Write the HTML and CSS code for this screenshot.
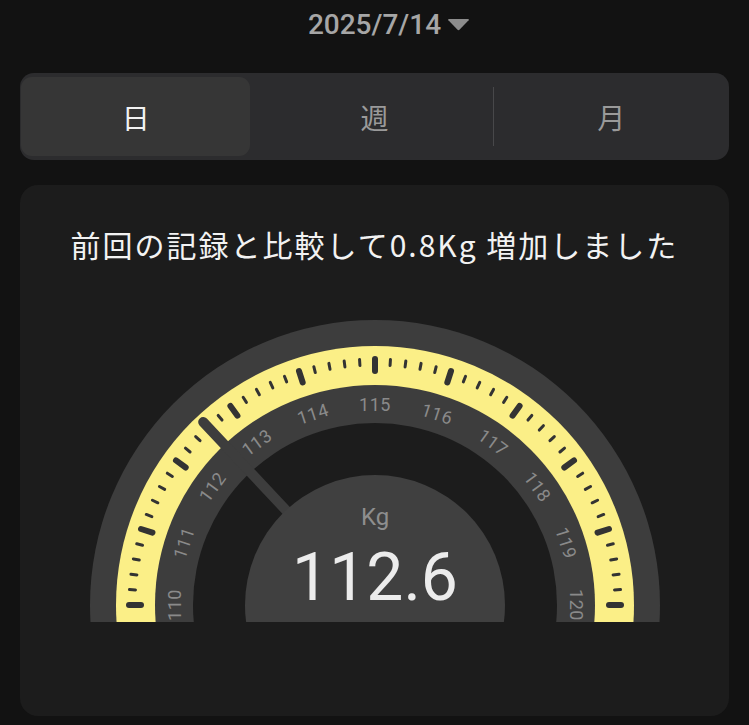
FILE: index.html
```html
<!DOCTYPE html>
<html lang="ja">
<head>
    <meta charset="UTF-8">
    <meta name="viewport" content="width=device-width, initial-scale=1.0">
    <title>体重</title>
    <link rel="stylesheet" href="styles.css">
</head>
<body>

    <div class="date-row">
        <span class="date">2025/7/14</span>
        <svg class="caret" width="23" height="13" viewBox="0 0 23 13">
            <path d="M2 1 L21 1 Q22.5 1 21.6 2.3 L12.7 11.6 Q11.5 12.8 10.3 11.6 L1.4 2.3 Q0.5 1 2 1 Z" fill="#8c8c8c"/>
        </svg>
    </div>

    <div class="segments">
        <div class="seg active">日</div>
        <div class="seg">週</div>
        <div class="seg split">月</div>
    </div>

    <div class="card">
        <p class="summary">前回の記録と比較して0.8Kg 増加しました</p>

        <svg class="gauge" id="gauge" width="570" height="302" viewBox="0 0 570 302">
            <circle cx="285" cy="285" r="285" fill="#3d3d3d"/>
            <circle cx="285" cy="285" r="259" fill="#fbef87"/>
            <circle cx="285" cy="285" r="220" fill="#3d3d3d"/>
            <circle cx="285" cy="285" r="182" fill="#1c1c1c"/>
            <g id="ticks"></g>
            <g id="labels"></g>
            <line id="needle" x1="285" y1="285" x2="285" y2="285" stroke="#3d3d3d" stroke-width="10" stroke-linecap="round"/>
            <circle cx="285" cy="285" r="130" fill="#404040"/>
            <text class="unit" x="285" y="205">Kg</text>
            <text class="value" x="285" y="280">112.6</text>
        </svg>
    </div>

    <script>
        // 目盛りとラベルを作る (110〜120, 0.2刻み)
        const NS = 'http://www.w3.org/2000/svg';
        const cx = 285, cy = 285;
        const weight = 112.6;

        function point(v, r) {
            const a = (180 - (v - 110) * 18) * Math.PI / 180;
            return [cx + r * Math.cos(a), cy - r * Math.sin(a)];
        }

        const ticks = document.getElementById('ticks');
        for (let i = 0; i <= 50; i++) {
            const v = 110 + i * 0.2;
            const major = i % 5 === 0;
            const p1 = point(v, major ? 234 : 240);
            const p2 = point(v, 246);
            const line = document.createElementNS(NS, 'line');
            line.setAttribute('x1', p1[0]);
            line.setAttribute('y1', p1[1]);
            line.setAttribute('x2', p2[0]);
            line.setAttribute('y2', p2[1]);
            line.setAttribute('class', major ? 'tick major' : 'tick');
            ticks.appendChild(line);
        }

        const labels = document.getElementById('labels');
        for (let v = 110; v <= 120; v++) {
            const p = point(v, 201);
            const t = document.createElementNS(NS, 'text');
            t.setAttribute('x', p[0]);
            t.setAttribute('y', p[1]);
            t.setAttribute('class', 'mark');
            t.setAttribute('transform', 'rotate(' + (v - 115) * 18 + ' ' + p[0] + ' ' + p[1] + ')');
            t.textContent = v;
            labels.appendChild(t);
        }

        // 針
        const tip = point(weight, 251);
        const needle = document.getElementById('needle');
        needle.setAttribute('x2', tip[0]);
        needle.setAttribute('y2', tip[1]);
    </script>

</body>
</html>
```

FILE: styles.css
```css
body {
    margin: 0;
    background-color: #121212;
    font-family: "Noto Sans CJK JP", "Noto Sans", sans-serif;
}
.date-row {
    display: grid;
    grid-template-columns: 1fr auto 1fr;
    align-items: center;
    padding-top: 9px;
    height: 32px;
}
.date {
    grid-column: 2;
    font-family: Roboto, "Liberation Sans", sans-serif;
    font-size: 28px;
    line-height: 32px;
    font-weight: 500;
    color: #a6a6a6;
}
.caret {
    display: block;
    margin: -2px 0 0 6px;
}
.segments {
    display: grid;
    grid-template-columns: repeat(3, 1fr);
    margin: 32px 20px 0;
    padding: 4px 0;
    height: 79px;
    background-color: #2c2c2e;
    border-radius: 14px;
}
.seg {
    display: flex;
    justify-content: center;
    align-items: center;
    font-size: 28px;
    color: #9a9a9a;
}
.seg.active {
    margin: 0 6px 0 1px;
    background-color: #363636;
    border-radius: 11px;
    color: #f2f2f2;
}
.seg.split {
    margin: 10px 0;
    border-left: 1px solid #48484a;
}
.card {
    margin: 25px 20px 0;
    padding: 39px 0 94px;
    background-color: #1c1c1c;
    border-radius: 18px;
}
.summary {
    margin: 0;
    text-align: center;
    font-size: 30px;
    line-height: 40px;
    letter-spacing: 2px;
    color: #f2f2f2;
}
.gauge {
    display: block;
    margin: 56px auto 0;
}
.tick {
    stroke: #333333;
    stroke-width: 3;
    stroke-linecap: round;
}
.tick.major {
    stroke-width: 6;
}
.mark {
    font-family: Roboto, "Liberation Sans", sans-serif;
    font-size: 18px;
    letter-spacing: 0.5px;
    fill: #8a8a8a;
    text-anchor: middle;
    dominant-baseline: central;
}
.unit {
    font-family: Roboto, "Liberation Sans", sans-serif;
    font-size: 24px;
    fill: #8e8e8e;
    text-anchor: middle;
}
.value {
    font-family: Roboto, "Liberation Sans", sans-serif;
    font-size: 66px;
    fill: #ececec;
    text-anchor: middle;
}
```
